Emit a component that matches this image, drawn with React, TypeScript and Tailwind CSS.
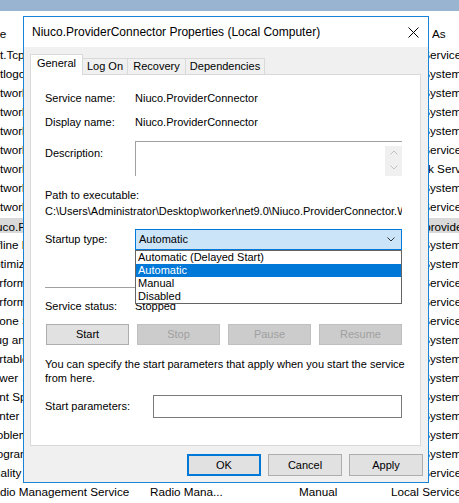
import React from 'react'

type Row = [string, string, string, string, string]

const rows: Row[] = [
  ['Net.Tcp Port Sharing Service', 'Provides abil...', '', 'Disabled', 'Local Service'],
  ['Netlogon', 'Maintains a s...', '', 'Manual', 'Local System'],
  ['Network Connected Devices Auto-Setup', 'Network Con...', '', 'Manual', 'Local System'],
  ['Network Connection Broker', 'Brokers con...', 'Running', 'Manual', 'Local System'],
  ['Network Connections', 'Manages obj...', '', 'Manual', 'Local System'],
  ['Network Connectivity Assistant', 'Provides Dir...', '', 'Manual', 'Local Service'],
  ['Network List Service', 'Identifies th...', 'Running', 'Manual', 'Network Service'],
  ['Network Location Awareness', 'Collects an...', 'Running', 'Automatic', 'Local System'],
  ['Network Setup Service', 'The Networ...', '', 'Manual', 'Local Service'],
  ['Niuco.ProviderConnector', '', '', 'Automatic', 'Niuco\\provider'],
  ['Offline Files', 'The Offline ...', '', 'Disabled', 'Local System'],
  ['Optimize drives', 'Helps the c...', '', 'Manual', 'Local System'],
  ['Performance Counter DLL Host', 'Enables rem...', '', 'Manual', 'Local Service'],
  ['Performance Logs & Alerts', 'Performanc...', '', 'Manual', 'Local Service'],
  ['Phone Service', 'Manages th...', '', 'Manual', 'Local Service'],
  ['Plug and Play', 'Enables a c...', 'Running', 'Manual', 'Local System'],
  ['Portable Device Enumerator Service', 'Enforces gr...', '', 'Manual', 'Local System'],
  ['Power', 'Manages po...', 'Running', 'Automatic', 'Local System'],
  ['Print Spooler', 'This service ...', 'Running', 'Automatic', 'Local System'],
  ['Printer Extensions and Notifications', 'This service ...', '', 'Manual', 'Local System'],
  ['Problem Reports Control Panel Support', 'This service ...', '', 'Manual', 'Local System'],
  ['Program Compatibility Assistant Service', 'This service ...', '', 'Manual', 'Local System'],
  ['Quality Windows Audio Video Experience', 'Quality Win...', '', 'Manual', 'Local Service'],
  ['Radio Management Service', 'Radio Mana...', '', 'Manual', 'Local Service'],
]

function ServiceList() {
  return (
    <div className="text-[11.7px] text-black">
      <div className="h-[11px] bg-[#99b4d1]" />
      <div className="h-[11px]" />
      <div className="ml-[-25px] h-[23px] grid grid-cols-[175px_149px_0px_92px_1fr] items-center whitespace-nowrap">
        <span>Name</span>
        <span>Description</span>
        <span className="overflow-hidden">Status</span>
        <span>Startup Type</span>
        <span>Log On As</span>
      </div>
      {rows.map(([name, desc, status, startup, logon], i) => (
        <div key={name} className={i === 9 ? 'h-[19px] py-[2px]' : 'h-[19px]'}>
          <div
            className={
              'ml-[-15px] h-full grid grid-cols-[165px_149px_0px_92px_1fr] items-center whitespace-nowrap ' +
              (i === 9 ? 'bg-[#d9d9d9]' : '')
            }
          >
            <span className="overflow-hidden">{name}</span>
            <span className="overflow-hidden">{desc}</span>
            <span className="overflow-hidden">{status}</span>
            <span className="overflow-hidden">{startup}</span>
            <span>{logon}</span>
          </div>
        </div>
      ))}
    </div>
  )
}

function Chevron({ up, color }: { up?: boolean; color: string }) {
  return (
    <svg width="8" height="5" viewBox="0 0 8 5" fill="none">
      <path d={up ? 'M0.5 4.5 L4 1 L7.5 4.5' : 'M0.5 0.5 L4 4 L7.5 0.5'} stroke={color} strokeWidth="1" />
    </svg>
  )
}

function Btn({ label, disabled, wide }: { label: string; disabled?: boolean; wide?: boolean }) {
  return (
    <div
      className={
        (wide ? 'w-[83px] h-[21px] ' : 'w-[74px] h-[22px] ') +
        'flex items-center justify-center border ' +
        (disabled ? 'bg-[#cccccc] border-[#bfbfbf] text-[#a0a0a0]' : 'bg-[#e1e1e1] border-[#adadad] text-black')
      }
    >
      {label}
    </div>
  )
}

function Dialog() {
  return (
    <div className="absolute left-[23px] top-[16px] w-[406px] h-[467px] border border-[#1883d7] bg-[#f0f0f0] flex flex-col text-[11px] text-black">
      <div className="h-[30px] bg-white flex items-center shrink-0">
        <span className="flex-1 pl-[8px] text-[12px]">Niuco.ProviderConnector Properties (Local Computer)</span>
        <div className="w-[30px] h-full flex items-center justify-center">
          <svg width="11" height="11" viewBox="0 0 11 11">
            <path d="M0.5 0.5 L10.5 10.5 M10.5 0.5 L0.5 10.5" stroke="#000" strokeWidth="1" />
          </svg>
        </div>
      </div>

      <div className="pt-[7px] flex flex-col">
        <div className="ml-[6px] h-[21px] -mb-px flex items-end relative z-10">
          <div className="w-[53px] h-[21px] bg-white border-t border-l border-r border-[#d9d9d9] flex items-center justify-center pb-[3px]">
            General
          </div>
          <div className="w-[45px] h-[17px] border-t border-r border-b border-[#d9d9d9] flex items-center justify-center">
            Log On
          </div>
          <div className="w-[58px] h-[17px] border-t border-r border-b border-[#d9d9d9] flex items-center justify-center">
            Recovery
          </div>
          <div className="w-[79px] h-[17px] border-t border-r border-b border-[#d9d9d9] flex items-center justify-center">
            Dependencies
          </div>
        </div>

        <div className="ml-[6px] w-[391px] h-[372px] border border-[#d9d9d9] bg-white pl-[14px] flex flex-col">
          <div className="mt-[15px] h-[16px] flex items-center">
            <span className="w-[90px]">Service name:</span>
            <span>Niuco.ProviderConnector</span>
          </div>
          <div className="mt-[8px] h-[16px] flex items-center">
            <span className="w-[90px]">Display name:</span>
            <span>Niuco.ProviderConnector</span>
          </div>
          <div className="mt-[11px] flex items-start">
            <span className="w-[90px] mt-[4px] h-[16px] flex items-center">Description:</span>
            <div className="w-[267px] h-[35px] border-t border-l border-[#a0a0a0] flex justify-end">
              <div className="w-[17px] mt-[4px] bg-[#f0f0f0] flex flex-col items-center pt-[4px] gap-[10px]">
                <Chevron up color="#c2c2c2" />
                <Chevron color="#c2c2c2" />
              </div>
            </div>
          </div>
          <div className="mt-[11px] h-[16px] flex items-center">Path to executable:</div>
          <div className="h-[16px] w-[357px] flex items-center overflow-hidden whitespace-nowrap">
            C:\Users\Administrator\Desktop\worker\net9.0\Niuco.ProviderConnector.WorkerService.exe
          </div>
          <div className="mt-[10px] h-[21px] flex items-center relative">
            <span className="w-[90px]">Startup type:</span>
            <div className="w-[267px] h-[21px] border border-[#0078d7] bg-[#cce4f7] flex items-center justify-between pl-[3px] pr-[6px]">
              <span>Automatic</span>
              <Chevron color="#333333" />
            </div>
            <div className="absolute left-[90px] top-[21px] w-[267px] border border-[#646464] bg-white z-20 flex flex-col">
              <div className="h-[13px] flex items-center pl-[2px]">Automatic (Delayed Start)</div>
              <div className="h-[13px] flex items-center pl-[2px] bg-[#0078d7] text-white">Automatic</div>
              <div className="h-[13px] flex items-center pl-[2px]">Manual</div>
              <div className="h-[13px] flex items-center pl-[2px]">Disabled</div>
            </div>
          </div>
          <div className="mt-[37px] h-px w-[357px] bg-[#a0a0a0]" />
          <div className="mt-[10px] h-[16px] flex items-center">
            <span className="w-[90px]">Service status:</span>
            <span>Stopped</span>
          </div>
          <div className="mt-[10px] ml-[1px] flex gap-[8px]">
            <Btn label="Start" wide />
            <Btn label="Stop" wide disabled />
            <Btn label="Pause" wide disabled />
            <Btn label="Resume" wide disabled />
          </div>
          <p className="mt-[12px] w-[370px] leading-[14px] whitespace-nowrap">
            You can specify the start parameters that apply when you start the service
            <br />
            from here.
          </p>
          <div className="mt-[10px] h-[23px] flex items-center">
            <span className="w-[108px]">Start parameters:</span>
            <div className="w-[249px] h-[23px] border border-[#7a7a7a] bg-white" />
          </div>
        </div>

        <div className="mt-[8px] pr-[5px] flex justify-end gap-[7px]">
          <div className="w-[74px] h-[22px] border-2 border-[#0078d7] bg-[#e1e1e1] flex items-center justify-center">
            OK
          </div>
          <Btn label="Cancel" />
          <Btn label="Apply" />
        </div>
      </div>
    </div>
  )
}

export default function App() {
  return (
    <div className="relative w-[459px] h-[503px] overflow-hidden bg-white font-['Liberation_Sans',Arial,sans-serif]">
      <ServiceList />
      <Dialog />
    </div>
  )
}
